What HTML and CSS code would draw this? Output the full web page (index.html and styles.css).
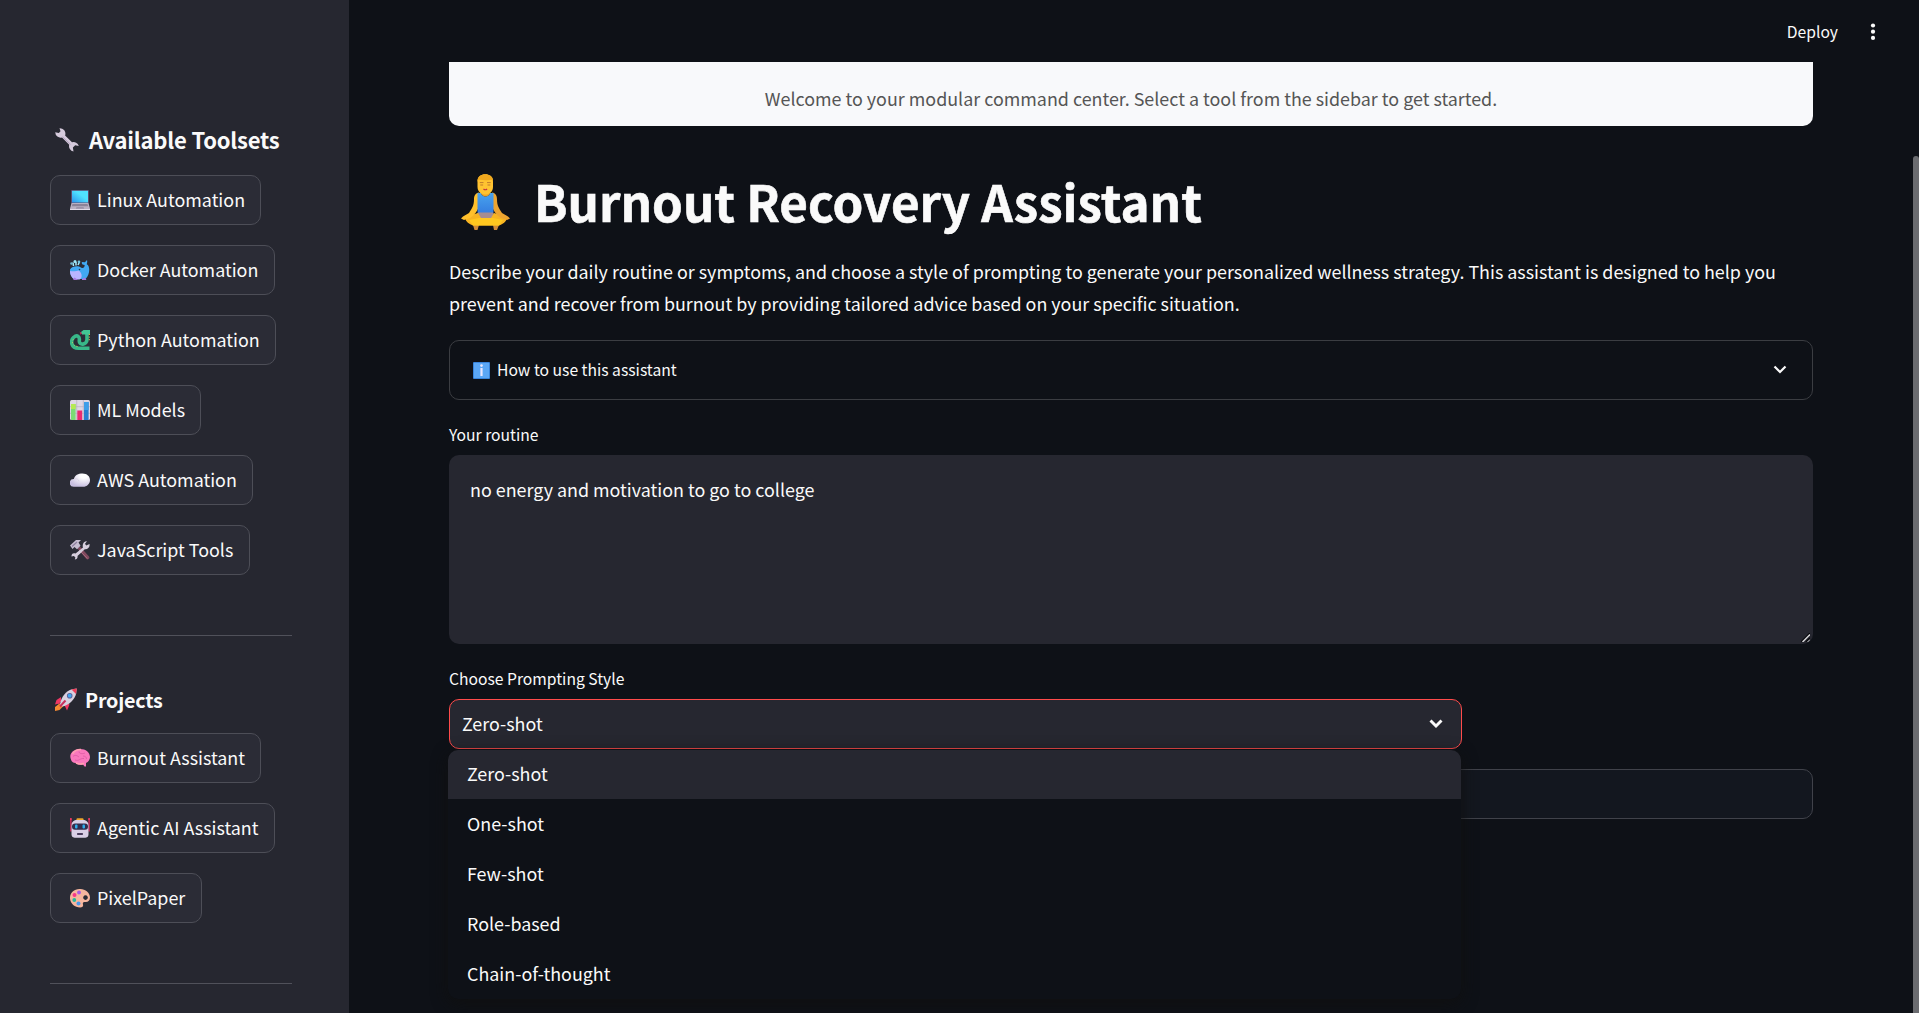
FILE: index.html
```html
<!DOCTYPE html>
<html lang="en">
<head>
<meta charset="utf-8">
<title>Burnout Recovery Assistant</title>
<link rel="stylesheet" href="styles.css">
</head>
<body>
<div class="app">
  <aside class="sidebar">
    <h3 class="side-title side-title-tools">
      <svg class="title-icon" viewBox="0 0 24 24"><path d="M4.500.2a5.500 5.500 0 0 1 5.600 7.300L17 14.300a5.500 5.500 0 0 1 6.800 3.600l-3.600-.6-2.300 2.300.6 3.900a5.500 5.500 0 0 1-4.300-6.800L7 9.500A5.500 5.500 0 0 1 .2 4.300l3.600.7 1.700-1.700z" fill="#d5cadc"/><path d="M7.500 8.700l8 7.600" stroke="#b7a5c2" stroke-width="1"/></svg>
      <span>Available Toolsets</span>
    </h3>
    <nav class="side-list">
      <button class="btn"><svg class="icon" viewBox="0 0 20 20"><defs><linearGradient id="scr" x1="1" y1="0" x2="0" y2="1"><stop offset=".4" stop-color="#50e2ff"/><stop offset="1" stop-color="#2b94ec"/></linearGradient></defs><rect x="1" width="18" height="13.500" rx=".8" fill="#5c4c70"/><rect x="2" y=".8" width="16" height="11.700" fill="url(#scr)"/><path d="M1.500 13h17l1.500 5.500v1H0v-1z" fill="#b9b0c2"/><path d="M2.500 14h15l.7 2.300H1.800z" fill="#8c8398"/><path d="M6.500 17h7l.7 1.700H5.800z" fill="#9c93a8"/><path d="M0 19h20v1H0z" fill="#e2dbe8"/></svg><span>Linux Automation</span></button>
      <button class="btn"><svg class="icon" viewBox="0 0 20 20"><path d="M0 9.500C2 6 8 5.500 11 7.500c2 1.400 3.600 0 3.700-2.500-2.200 0-3.200-1-2.800-3l3 .2L17 0c.4 1.500.2 3-.3 4.200C20.500 6 20 14.500 15.500 19H4C1 17-.5 13 0 9.500z" fill="#41a9f3"/><path d="M0 11c4 .5 7 0 8.500-.6C12 12 13 18 9.500 19.500H4C1 17 0 14 0 11z" fill="#b9b5ff"/><path d="M3 19l1.500-1.500L8 20H4zM12 19l3-1.500 1.500 2.500H12z" fill="#a679df"/><path d="M3.500 6L3 2.500M6 5.500V2M8 5l1.500-3" stroke="#a6eafa" stroke-width="1.500"/><circle cx="1.500" cy="3.500" r="1.300" fill="#71b5cd"/><circle cx="5" cy="1.500" r="1.500" fill="#9de8fa"/><circle cx="9" cy="1.800" r="1.300" fill="#71c6e2"/><circle cx="9.500" cy="9.500" r=".8" fill="#253852"/></svg><span>Docker Automation</span></button>
      <button class="btn"><svg class="icon" viewBox="0 0 20 20"><path d="M19.500 18.200H8.500C1 18 .2 11 3.500 7.500 7.500 4 9.800 7 9.300 10.500c-.6 5.500 7.700 4.500 7.700-1V2.500" fill="none" stroke="#38b889" stroke-width="3.600"/><path d="M11 2L13.500 0H20v4.500h-8z" fill="#43c694"/><path d="M7.500 16.500C2 15.500 1 11 4.500 8" fill="none" stroke="#c6d95a" stroke-width="1" stroke-dasharray="1 2"/><path d="M19.300 4v7" stroke="#efc94c" stroke-dasharray="1 1.600"/><path d="M12 3.600L9.500 1.500l1 2.400-1 1z" fill="#dc315c"/></svg><span>Python Automation</span></button>
      <button class="btn"><svg class="icon" viewBox="0 0 20 20"><rect width="20" height="20" rx="1.500" fill="#ded7e5"/><path d="M0 6.700h20M0 13.300h20M6.700 0v20M13.300 0v20" stroke="#b6adbf" stroke-width=".7"/><path d="M1 4h4.600v16H1z" fill="#7bdc75"/><path d="M1 4h4.600v5H1z" fill="#b6e954"/><path d="M7.300 10.500h4.900V20H7.300z" fill="#eb2b70"/><path d="M14 2h4.600v18H14z" fill="#287fd0"/><path d="M14 2h4.600v8H14z" fill="#3e9ee9"/></svg><span>ML Models</span></button>
      <button class="btn"><svg class="icon" viewBox="0 0 20 20"><defs><radialGradient id="cld" cx=".7" cy=".2" r=".8"><stop offset=".2" stop-color="#fff"/><stop offset="1" stop-color="#c8bfe0"/></radialGradient></defs><path d="M3.700 16.800a3.900 3.900 0 0 1 .1-7.900C5 5 8 3.400 12.500 3.400c4.500 0 7.500 2.800 7.500 6.600s-3 6.800-7 6.800z" fill="url(#cld)"/><path d="M4 9c3-.8 5 .6 5 2.500" fill="none" stroke="#d4cde0" stroke-width=".7"/></svg><span>AWS Automation</span></button>
      <button class="btn"><svg class="icon" viewBox="0 0 20 20"><path d="M7.500 8.500l2.500-2 9 10c1.300 1.700-1 4-2.600 2.600z" fill="#80495e"/><path d="M9 10l8.500 8.500" stroke="#a3697b" stroke-width="1"/><path d="M0 5.500L6 0h5L8.500 2.500l2 3.300L7 9.300 4.500 7 2.500 9z" fill="#c6bdd0"/><path d="M2 6.500L7 2" stroke="#8c7f9d" stroke-width="1.200"/><path d="M13 7.500c-1-3 .5-6.300 4-6.300l-2 2.600 1.200 1.700L19.500 4c.7 3.500-2 5.700-4.700 5.300L7.500 16c.5 1.700-.7 3.600-2.700 3.600l.6-2-1.500-1.700-2.400.7C1.300 14 3 12.500 5.500 13.500z" fill="#d6cedd"/></svg><span>JavaScript Tools</span></button>
    </nav>
    <hr class="rule">
    <h4 class="side-title side-title-projects">
      <svg class="title-icon" viewBox="0 0 24 24"><path d="M5.500 15.500L1 19v4l4.500-1 4-4z" fill="#f58a32"/><path d="M7 9L2.500 12 1 16.500l6-1.500zM15.500 16.500l-2.500 6-2-4.200-6-2.800L8.500 12z" fill="#ef3763"/><path d="M6 16.500C7 9 12 3 18 1.300l4.700-.8-.5 4.700C21 11 15 17.500 8 18.500z" fill="#d8d0df"/><path d="M17.500 1.500l5.300-1-.8 5.500z" fill="#f03c58"/><path d="M6 18.500l5.500-6" stroke="#c92f5c" stroke-width="2"/><circle cx="15.700" cy="7.700" r="2.800" fill="#5a5e9a"/><circle cx="15.700" cy="7.700" r="1.900" fill="#43a9f0"/></svg>
      <span>Projects</span>
    </h4>
    <nav class="side-list">
      <button class="btn"><svg class="icon" viewBox="0 0 20 20"><path d="M1 11.500C-1.500 6 3 1.500 9 1c6-.6 11 3 11 8 0 2.500-1.500 5-4 6v3.500h-1.500L13 16.500c-4.500 1-5.500-.6-7.500-1.500C3 15 1.500 13.500 1 11.500z" fill="#fa78bd"/><path d="M2.500 6C4 3 8 1 11 1.500M6 15c3 1.500 6 1 8 .5" fill="none" stroke="#ffa0b0" stroke-width="1.500"/><path d="M3 8.500c2-2 4-1 6 .5M9 3.500c0 2.500 4 2.500 6 1.500M5 12c4 1.500 5-2 9-1.500M13 8c2 0 3.500 1 3.500 3" fill="none" stroke="#d9559f" stroke-width=".7"/></svg><span>Burnout Assistant</span></button>
      <button class="btn"><svg class="icon" viewBox="0 0 20 20"><path d="M.9.500v13M19.100.500v13" stroke="#db2b62" stroke-width="1.300"/><circle cx=".9" cy="1" r=".9" fill="#fb3b64"/><circle cx="19.100" cy="1" r=".9" fill="#fb3b64"/><rect x="6.500" y=".2" width="7" height="3" rx="1" fill="#eda52a"/><path d="M1.500 7c0-3.500 3-5 5-5h7c2 0 5 1.500 5 5v9c0 3-1.500 3.700-4 3.700h-9c-2.500 0-4-.7-4-3.700z" fill="#d9cfe6"/><rect x="2" y="5.500" width="16" height="6.300" rx="3" fill="#332e4e"/><rect x="5" y="6.500" width="2.500" height="4" rx="1" fill="#2faeee"/><rect x="12.500" y="6.500" width="2.500" height="4" rx="1" fill="#2faeee"/><rect x="7" y="15" width="6" height="2" rx=".7" fill="#493c5c"/></svg><span>Agentic AI Assistant</span></button>
      <button class="btn"><svg class="icon" viewBox="0 0 20 20"><path fill-rule="evenodd" d="M9.500 1C15 .6 20 4.500 20 9.500c0 3-2 4.800-4.700 4.500-2.300-.2-2.800 1-2.300 2.500.6 2-1 3-2.800 3C4.500 19.500-.3 15 0 9.500.2 4.700 4 1.300 9.500 1zM15.500 7.300a2.300 2.300 0 1 0 .01 0z" fill="#f7b69e"/><circle cx="9" cy="4.500" r="1.900" fill="#a95ae5"/><circle cx="4.500" cy="7" r="2" fill="#f53889"/><circle cx="4.300" cy="12" r="1.900" fill="#29b99d"/><circle cx="8.500" cy="15.500" r="2" fill="#4a99ee"/></svg><span>PixelPaper</span></button>
    </nav>
    <hr class="rule rule-last">
  </aside>

  <div class="page">
    <header class="topbar">
      <span class="deploy">Deploy</span>
      <svg class="kebab" viewBox="0 0 6 18"><circle cx="3" cy="2.500" r="2.100"/><circle cx="3" cy="8.700" r="2.100"/><circle cx="3" cy="14.900" r="2.100"/></svg>
    </header>
    <main class="content">
      <div class="banner">Welcome to your modular command center. Select a tool from the sidebar to get started.</div>
      <h1 class="title">
        <svg class="yoga" viewBox="0 0 50 56"><defs><linearGradient id="shirt" x1="0" y1="0" x2="0" y2="1"><stop offset="0" stop-color="#48a3ee"/><stop offset="1" stop-color="#367fe0"/></linearGradient></defs><path d="M12 51h6l-1.500 5h-3zM32 51h6l-2 5h-3z" fill="#d28b37"/><path d="M17 38h15l3 7H14z" fill="#a58d91"/><path d="M4 44c4-2 8-4 13-5l3 5h10l3-5c5 1 9 3 13 5-1 4-4 6-8 7.500H12C8 50 5 48 4 44z" fill="#f8b422"/><path d="M8 46l10-2h14l10 2-4 5.500H12z" fill="#ffc71f"/><path d="M18 18.500c-3.500.5-5 3-5 7 0 6-2 9-5 13.500L2 42.500 0 44.500l3 1.500 6-2c5-3 8-8 10-14z" fill="#ffc02c"/><path d="M31 18.500c3.500.5 5 3 5 7 0 6 2 9 5 13.500l6 3.500 2 2-3 1.500-6-2c-5-3-8-8-10-14z" fill="#eea530"/><path d="M16.500 19h3.500c1 4.500 8 4.500 9 0h3.500v19.500h-16z" fill="url(#shirt)"/><path d="M20 16h9v3c-1 4.500-8 4.500-9 0z" fill="#f0a426"/><path d="M16.500 6.500c0-8.500 15.500-8.500 15.500 0V13c0 5-4 7.500-7.700 7.500S16.500 18 16.500 13z" fill="#ffc331"/><path d="M16.500 8c-1-10.500 16.500-10.500 15.500 0l-1-2.200c-4 1-9.500 0-13.500 0z" fill="#f0a81e"/><path d="M18.800 8.600h3.700M26 8.600h3.700M19.300 11h2.800M26.500 11h2.800" stroke="#b06a28" stroke-width=".8"/><path d="M22.500 15q1.800 1.500 3.600 0" fill="none" stroke="#c4353e" stroke-width="1.200"/></svg>
        <span>Burnout Recovery Assistant</span>
      </h1>
      <p class="intro">Describe your daily routine or symptoms, and choose a style of prompting to generate your personalized wellness strategy. This assistant is designed to help you<br>prevent and recover from burnout by providing tailored advice based on your specific situation.</p>
      <div class="expander">
        <svg class="info" viewBox="0 0 17 17"><rect width="17" height="17" rx="1" fill="#3984dc"/><rect x="1" y="1" width="15" height="15" fill="#5ba7f6"/><circle cx="8.500" cy="3.600" r="1.300" fill="#e9e7ff"/><path d="M8.500 6v8" stroke="#e9e7ff" stroke-width="2.200"/></svg>
        <span class="expander-label">How to use this assistant</span>
        <svg class="chev" viewBox="0 0 14 9"><path d="M1.500 1.500L7 7l5.500-5.500"/></svg>
      </div>
      <label class="label label-routine">Your routine</label>
      <div class="textarea"><span>no energy and motivation to go to college</span>
        <svg class="grip" viewBox="0 0 9 9"><path d="M0 9L9 0M5 9l4-4" stroke="#08090c" stroke-width="1.500"/><path d="M1.500 9L9 1.500" stroke="#d6d6d8" stroke-width="1.500"/><path d="M6.500 9L9 6.500" stroke="#d6d6d8" stroke-width="1"/></svg>
      </div>
      <label class="label label-style">Choose Prompting Style</label>
      <div class="select-wrap">
        <div class="select"><span>Zero-shot</span><svg class="chev chev-bold" viewBox="0 0 14 9"><path d="M1.500 1.500L7 7l5.500-5.500"/></svg></div>
        <ul class="menu">
          <li class="option active">Zero-shot</li>
          <li class="option">One-shot</li>
          <li class="option">Few-shot</li>
          <li class="option">Role-based</li>
          <li class="option">Chain-of-thought</li>
        </ul>
      </div>
      <button class="submit"></button>
    </main>
  </div>
  <div class="scroll-track"><div class="scroll-thumb"></div></div>
</div>
</body>
</html>
```
FILE: styles.css
```css
* { box-sizing: border-box; }
body {
  margin: 0;
  background: #0e1117;
  color: #fafafa;
  font-family: "Noto Sans CJK SC", "Noto Sans", sans-serif;
  font-size: 17.9px;
  overflow: hidden;
}
.app { display: flex; width: 1919px; height: 1013px; overflow: hidden; }
svg { display: block; flex: none; }

/* Sidebar */
.sidebar { flex: none; width: 349px; height: 1013px; padding: 121px 57px 0 50px; background: #262730; }
.side-title { display: flex; align-items: center; margin: 0; white-space: nowrap; font-weight: 700; }
.side-title span { padding-bottom: 2px; }
.side-title-tools { height: 38px; margin-bottom: 16px; padding-left: 5px; gap: 10px; font-size: 22px; letter-spacing: -.2px; }
.side-title-projects { height: 38px; margin: 45px 0 14px; padding-left: 4px; gap: 7px; font-size: 19.7px; letter-spacing: -.2px; }
.title-icon { width: 24px; height: 24px; }
.side-list { display: flex; flex-direction: column; align-items: flex-start; gap: 20px; }
.btn {
  display: flex; align-items: center; gap: 7px; height: 50px; padding: 0 15.4px 0 19px;
  border: 1px solid #4d4e57; border-radius: 10px; background: #2b2c36;
  color: inherit; font: inherit; line-height: 30px; white-space: nowrap;
}
.btn span { padding-bottom: 2px; }
.icon { width: 20px; height: 20px; }
.rule { height: 1px; margin: 60px 0 0; border: 0; background: #50515a; }

/* Page */
.page { flex: 1; min-width: 0; }
.topbar { display: flex; justify-content: flex-end; align-items: center; height: 62px; padding: 2px 37px 0 0; gap: 32px; }
.deploy { font-size: 15.66px; line-height: 26px; }
.kebab { width: 6px; height: 18px; fill: #fafafa; }
.content { display: flex; flex-direction: column; padding: 0 100px; }
.banner {
  height: 64px; padding-top: 20px; border-radius: 0 0 10px 10px; background: #f8f9fb;
  color: #555; line-height: 32px; text-align: center;
}
.title { display: flex; align-items: center; height: 66px; margin: 43px 0 0; padding-left: 13px; gap: 23px; font-size: 49.3px; line-height: 64px; white-space: nowrap; -webkit-text-stroke: .6px #fafafa; }
.title span { padding-bottom: 2px; }
.yoga { width: 50px; height: 56px; margin-left: -1px; -webkit-text-stroke: 0; }
.intro { margin: 20px 0 0; line-height: 32px; white-space: nowrap; }
.expander { display: flex; align-items: center; height: 60px; margin-top: 21px; padding: 0 25px 0 23px; gap: 7px; border: 1px solid #3b3d42; border-radius: 10px; font-size: 15.66px; }
.info { width: 17px; height: 17px; }
.expander-label { flex: 1; padding-bottom: 2px; }
.chev { width: 14px; height: 9px; margin-bottom: 1px; fill: none; stroke: #fafafa; stroke-width: 2.2; }
.chev-bold { stroke-width: 2.9; }
.label { height: 26px; font-size: 15.66px; line-height: 26px; }
.label-routine { margin: 22px 0 7px; }
.textarea { position: relative; height: 189px; padding: 19px 21px; border-radius: 10px; background: #262730; line-height: 30px; }
.grip { position: absolute; right: 3px; bottom: 2px; width: 9px; height: 9px; }
.label-style { margin: 22px 0 7px; }
.select-wrap { position: relative; width: 1013px; height: 50px; }
.select { display: flex; align-items: center; justify-content: space-between; height: 50px; padding: 0 18px 0 12px; border: 1px solid #ff4b4b; border-radius: 10px; background: #262730; }
.select span { padding-bottom: 2px; }
.menu {
  position: absolute; z-index: 2; top: 51px; left: -1px; width: 1013px; height: 249px; margin: 0; padding: 0;
  overflow: hidden; border-radius: 10px; background: #0e1117; box-shadow: 0 4px 16px rgba(16, 16, 16, .95); list-style: none;
}
.option { height: 50px; padding-left: 19px; line-height: 48px; }
.active { height: 49px; line-height: 46px; background: #262730; }
.submit { height: 50px; margin-top: 20px; border: 1px solid #40424a; border-radius: 10px; background: #13171f; }

/* Scrollbar */
.scroll-track { flex: none; width: 6px; padding-top: 156px; }
.scroll-thumb { height: 857px; border-radius: 3px 3px 0 0; background: #6b6c70; }
```
